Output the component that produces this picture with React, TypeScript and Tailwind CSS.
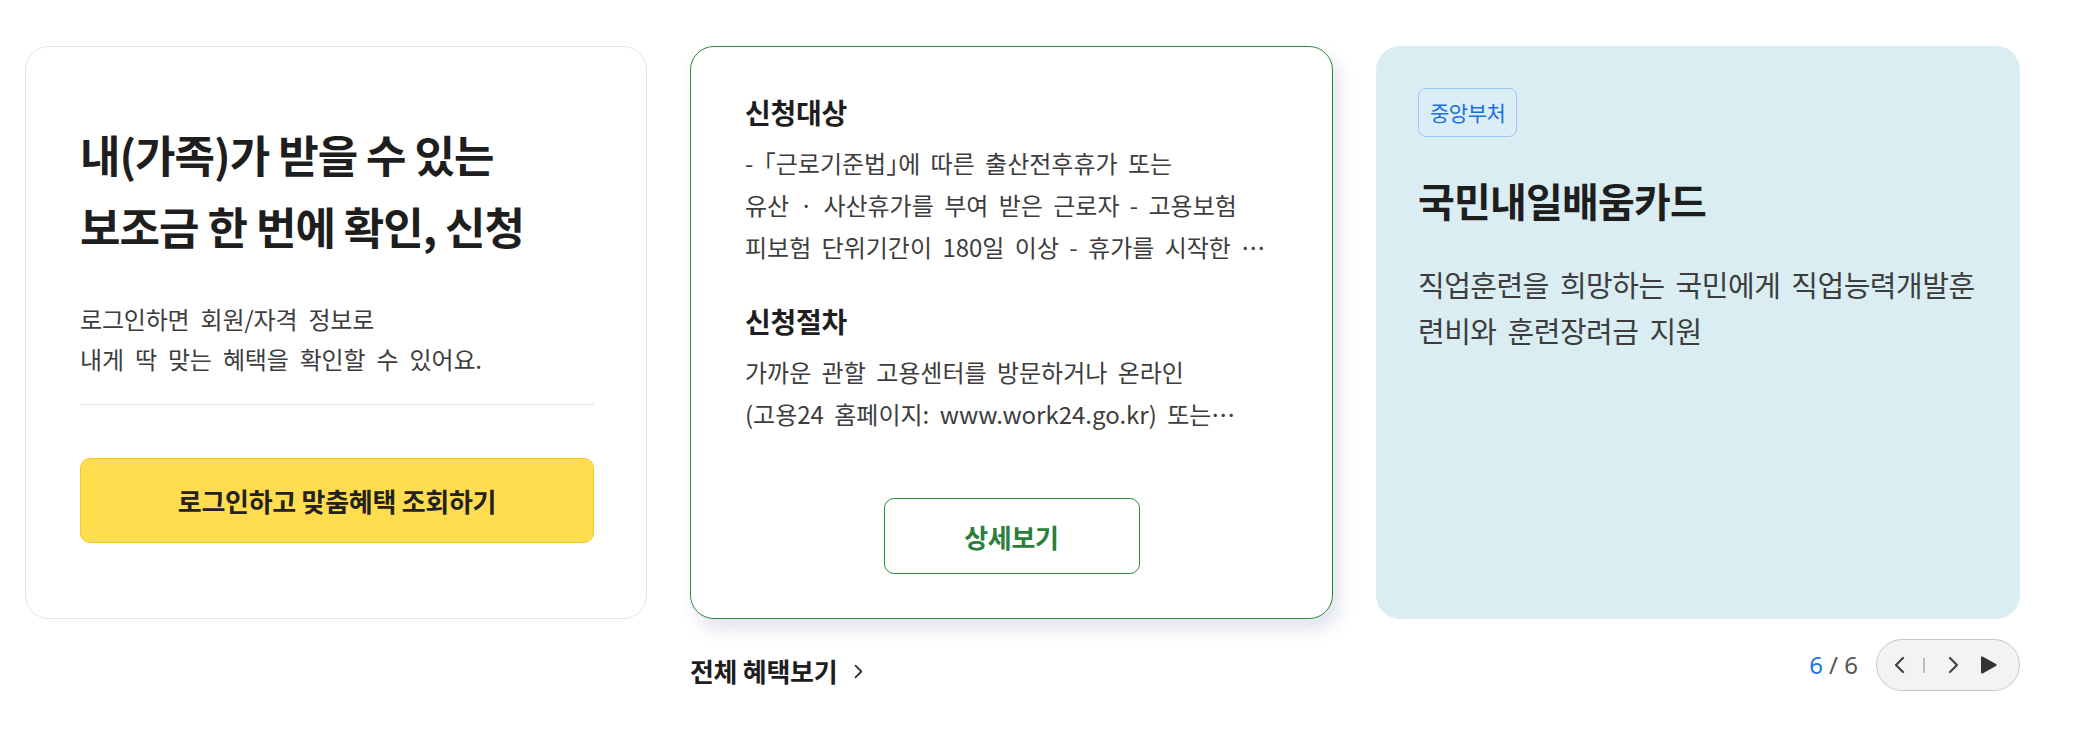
const ChevronRight = ({ className }: { className?: string }) => (
  <svg viewBox="0 0 12 18" className={className} fill="none" stroke="currentColor" strokeWidth="2.2" strokeLinecap="round" strokeLinejoin="round">
    <path d="M3 2l7 7-7 7" />
  </svg>
)

const ChevronLeft = ({ className }: { className?: string }) => (
  <svg viewBox="0 0 12 18" className={className} fill="none" stroke="currentColor" strokeWidth="2.2" strokeLinecap="round" strokeLinejoin="round">
    <path d="M9 2L2 9l7 7" />
  </svg>
)

const LoginCard = () => (
  <section className="w-[622px] h-[573px] shrink-0 rounded-[24px] border border-[#e4e4ea] bg-white pl-[54px] pr-[40px] pt-[71px]">
    <h2 className="text-[44px] leading-[72px] font-bold tracking-[-1px] text-[#1e1e1e] whitespace-nowrap">
      내(가족)가 받을 수 있는
      <br />
      보조금 한 번에 확인, 신청
    </h2>
    <p className="mt-[37px] text-[24px] leading-[40px] tracking-[-0.2px] [word-spacing:6px] text-[#3d3d3d] whitespace-nowrap">
      로그인하면 회원/자격 정보로
      <br />
      내게 딱 맞는 혜택을 확인할 수 있어요.
    </p>
    <div className="mt-[25px] mr-[12px] h-px bg-[#e3e3ea]" />
    <button className="mt-[53px] flex h-[85px] w-[514px] items-center justify-center rounded-[10px] border border-[#f1c82c] bg-[#ffdd4f] text-[26px] font-bold tracking-[-0.3px] text-[#222]">
      로그인하고 맞춤혜택 조회하기
    </button>
  </section>
)

const DetailCard = () => (
  <section className="flex w-[643px] h-[573px] shrink-0 flex-col rounded-[24px] border border-[#2b8a3e] bg-white px-[54px] pt-[47px] shadow-[6px_10px_18px_rgba(60,80,140,0.16)]">
    <h3 className="text-[28px] leading-[36px] font-bold tracking-[-0.3px] text-[#1e1e1e]">신청대상</h3>
    <div className="mt-[12px] text-[24px] leading-[42px] tracking-[0px] [word-spacing:5px] text-[#3d3d3d] whitespace-nowrap">
      <div>
        - <span className="[font-feature-settings:'halt']">「</span>근로기준법<span className="[font-feature-settings:'halt']">」</span>에 따른 출산전후휴가 또는
      </div>
      <div>유산 · 사산휴가를 부여 받은 근로자 - 고용보험</div>
      <div>피보험 단위기간이 180일 이상 - 휴가를 시작한 …</div>
    </div>
    <h3 className="mt-[35px] text-[28px] leading-[36px] font-bold tracking-[-0.3px] text-[#1e1e1e]">신청절차</h3>
    <div className="mt-[12px] text-[24px] leading-[42px] tracking-[0px] [word-spacing:5px] text-[#3d3d3d] whitespace-nowrap">
      <div>가까운 관할 고용센터를 방문하거나 온라인</div>
      <div>(고용24 홈페이지: www.work24.go.kr) 또는…</div>
    </div>
    <button className="mx-auto mt-[63px] flex h-[76px] w-[256px] items-center justify-center rounded-[10px] border border-[#2b8a3e] bg-white text-[26px] font-bold tracking-[-0.3px] text-[#2a7f3b]">
      상세보기
    </button>
  </section>
)

const BenefitCard = () => (
  <section className="w-[644px] h-[573px] shrink-0 rounded-[24px] bg-[#d9edf2] pl-[42px] pr-[30px] pt-[42px]">
    <span className="inline-flex h-[49px] items-center rounded-[8px] border border-[#9cc6f5] bg-[#dceef5] px-[11px] text-[21px] tracking-[-0.5px] text-[#1a6fdf]">
      중앙부처
    </span>
    <h3 className="mt-[39px] text-[40px] leading-[48px] font-bold tracking-[-0.8px] text-[#1e1e1e]">국민내일배움카드</h3>
    <p className="mt-[37px] text-[29px] leading-[46px] tracking-[-0.5px] [word-spacing:5px] text-[#3d3d3d] whitespace-nowrap">
      직업훈련을 희망하는 국민에게 직업능력개발훈
      <br />
      련비와 훈련장려금 지원
    </p>
  </section>
)

export default function App() {
  return (
    <div className="min-h-screen bg-white font-['Noto_Sans_CJK_KR','Noto_Sans_KR',sans-serif]">
      <div className="flex items-start pl-[25px] pt-[46px]">
        <LoginCard />
        <div className="ml-[43px] w-[1330px]">
          <div className="flex gap-[43px]">
            <DetailCard />
            <BenefitCard />
          </div>
          <div className="mt-[20px] flex items-start justify-between">
            <a className="mt-[16px] flex items-center text-[26px] leading-[32px] font-bold tracking-[-0.3px] text-[#1e1e1e]">
              전체 혜택보기
              <ChevronRight className="ml-[16px] h-[15px] w-[10px] text-[#333]" />
            </a>
            <div className="flex items-center">
              <div className="font-['Noto_Sans',sans-serif] text-[24px] leading-[32px] text-[#555]">
                <span className="text-[#1a73e8]">6</span> / 6
              </div>
              <div className="ml-[18px] flex h-[52px] w-[144px] items-center rounded-full border border-[#c8c8c8] bg-[#f3f3f3] pl-[17px] text-[#444]">
                <ChevronLeft className="h-[18px] w-[12px]" />
                <span className="ml-[17px] h-[15px] w-[2px] bg-[#bdbdbd]" />
                <ChevronRight className="ml-[22px] h-[18px] w-[12px]" />
                <svg viewBox="0 0 17 18" className="ml-[21px] h-[18px] w-[17px] text-[#333]" fill="currentColor">
                  <path d="M1 1.5v15a1 1 0 0 0 1.5.9l13.5-7.5a1 1 0 0 0 0-1.8L2.5.6A1 1 0 0 0 1 1.5z" />
                </svg>
              </div>
            </div>
          </div>
        </div>
      </div>
    </div>
  )
}
